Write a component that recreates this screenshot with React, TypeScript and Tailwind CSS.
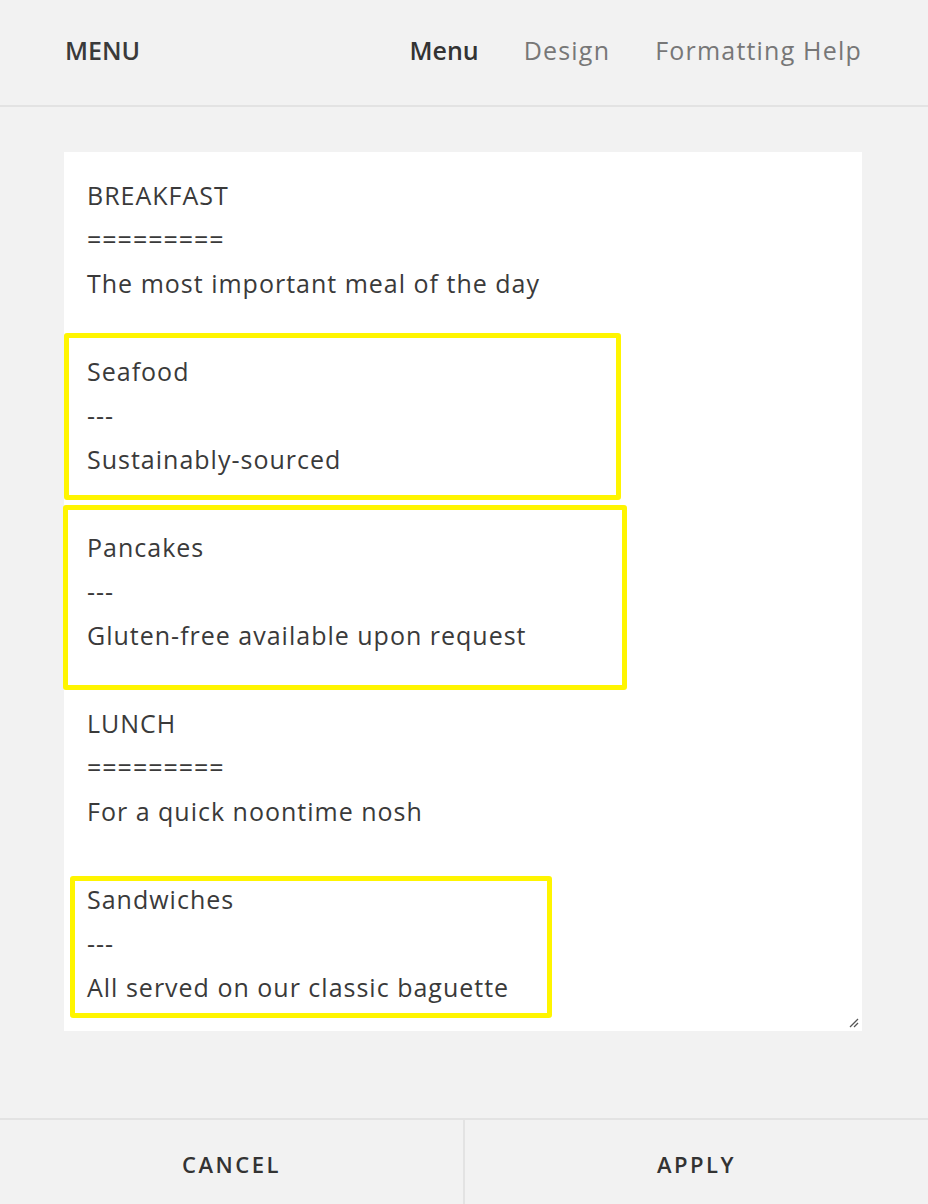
import React from "react";

const lines: string[] = [
  "BREAKFAST",
  "=========",
  "The most important meal of the day",
  "",
  "Seafood",
  "---",
  "Sustainably-sourced",
  "",
  "Pancakes",
  "---",
  "Gluten-free available upon request",
  "",
  "LUNCH",
  "=========",
  "For a quick noontime nosh",
  "",
  "Sandwiches",
  "---",
  "All served on our classic baguette",
];

export default function App() {
  const font = { fontFamily: '"Open Sans", "Liberation Sans", sans-serif' };
  return (
    <div className="w-[928px] h-[1204px] bg-[#f2f2f2] flex flex-col text-[#3a3a3a]" style={font}>
      <header className="h-[107px] border-b-2 border-[#e3e3e3] flex items-center justify-between pl-[65px] pr-[66px] pb-[3px] shrink-0">
        <div className="text-[25px] font-semibold">MENU</div>
        <nav className="flex items-center gap-[45px] text-[25px]">
          <span className="font-semibold text-[#333]">Menu</span>
          <span className="text-[#777] tracking-[1.2px]">Design</span>
          <span className="text-[#777] tracking-[1.2px]">Formatting Help</span>
        </nav>
      </header>
      <main className="flex-1 px-[64px] pt-[45px]">
        <div className="relative bg-white w-[798px] h-[879px] pt-[21px] px-[23px]">
          {lines.map((l, i) => (
            <div key={i} className="h-[44px] leading-[44px] text-[25px] tracking-[1px] text-[#3a3a3a] whitespace-pre">
              {l || "\u00a0"}
            </div>
          ))}
          <svg className="absolute right-[2px] bottom-[2px]" width="14" height="14" viewBox="0 0 14 14">
            <line x1="12" y1="4" x2="4" y2="12" stroke="#555" strokeWidth="1.2" />
            <line x1="12" y1="8" x2="8" y2="12" stroke="#555" strokeWidth="1.2" />
          </svg>
          <div className="absolute left-0 top-[181px] w-[557px] h-[167px] border-[5px] border-[#fff500] rounded-[3px]" />
          <div className="absolute left-[-1px] top-[353px] w-[564px] h-[185px] border-[5px] border-[#fff500] rounded-[3px]" />
          <div className="absolute left-[6px] top-[724px] w-[482px] h-[142px] border-[5px] border-[#fff500] rounded-[3px]" />
        </div>
      </main>
      <footer className="h-[86px] border-t-2 border-[#e3e3e3] flex shrink-0">
        <button className="flex-1 flex items-center justify-center pt-[4px] text-[22px] font-semibold tracking-[2.5px] text-[#333] border-r-2 border-[#e3e3e3]">
          CANCEL
        </button>
        <button className="flex-1 flex items-center justify-center pt-[4px] text-[22px] font-semibold tracking-[2.5px] text-[#333]">
          APPLY
        </button>
      </footer>
    </div>
  );
}
